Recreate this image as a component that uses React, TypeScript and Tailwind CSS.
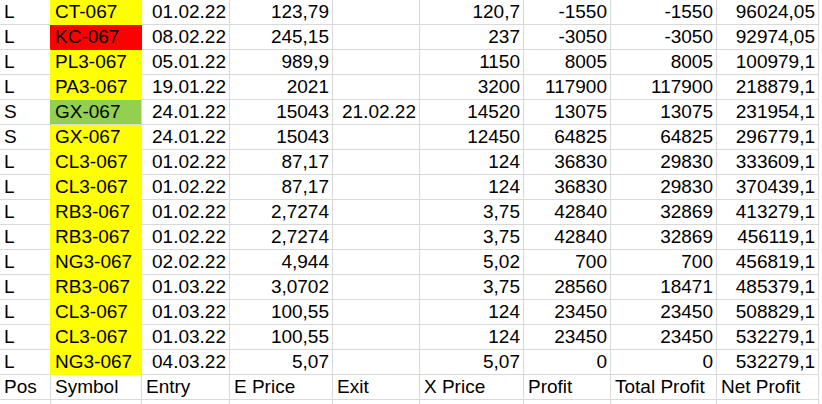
const rows: [string, string, string, string, string, string, string, string, string, string][] = [
  ['L', 'CT-067', '01.02.22', '123,79', '', '120,7', '-1550', '-1550', '96024,05', 'y'],
  ['L', 'KC-067', '08.02.22', '245,15', '', '237', '-3050', '-3050', '92974,05', 'r'],
  ['L', 'PL3-067', '05.01.22', '989,9', '', '1150', '8005', '8005', '100979,1', 'y'],
  ['L', 'PA3-067', '19.01.22', '2021', '', '3200', '117900', '117900', '218879,1', 'y'],
  ['S', 'GX-067', '24.01.22', '15043', '21.02.22', '14520', '13075', '13075', '231954,1', 'g'],
  ['S', 'GX-067', '24.01.22', '15043', '', '12450', '64825', '64825', '296779,1', 'y'],
  ['L', 'CL3-067', '01.02.22', '87,17', '', '124', '36830', '29830', '333609,1', 'y'],
  ['L', 'CL3-067', '01.02.22', '87,17', '', '124', '36830', '29830', '370439,1', 'y'],
  ['L', 'RB3-067', '01.02.22', '2,7274', '', '3,75', '42840', '32869', '413279,1', 'y'],
  ['L', 'RB3-067', '01.02.22', '2,7274', '', '3,75', '42840', '32869', '456119,1', 'y'],
  ['L', 'NG3-067', '02.02.22', '4,944', '', '5,02', '700', '700', '456819,1', 'y'],
  ['L', 'RB3-067', '01.03.22', '3,0702', '', '3,75', '28560', '18471', '485379,1', 'y'],
  ['L', 'CL3-067', '01.03.22', '100,55', '', '124', '23450', '23450', '508829,1', 'y'],
  ['L', 'CL3-067', '01.03.22', '100,55', '', '124', '23450', '23450', '532279,1', 'y'],
  ['L', 'NG3-067', '04.03.22', '5,07', '', '5,07', '0', '0', '532279,1', 'y'],
];

const headers = ['Pos', 'Symbol', 'Entry', 'E Price', 'Exit', 'X Price', 'Profit', 'Total Profit', 'Net Profit'];

const fills: Record<string, string> = {
  y: 'bg-[#ffff00] border-[#ffff00]',
  r: 'bg-[#ff0000] border-[#ff0000]',
  g: 'bg-[#92d050] border-[#92d050]',
};
const posEdge: Record<string, string> = {
  y: 'border-r-[#ffff00]',
  r: 'border-r-[#ff0000]',
  g: 'border-r-[#92d050]',
};

const cell = 'h-[25px] border-r border-b border-[#d9d9d9] leading-[24px] whitespace-nowrap overflow-hidden';

const App = () => {
  return (
    <div className="w-[822px] h-[404px] overflow-hidden bg-white text-black text-[19px] font-['Liberation_Sans',Arial,sans-serif]">
      <div className="grid grid-cols-[51px_91px_88px_103px_87px_104px_87px_106px_102px]">
        {rows.map((r, i) => (
          <div key={i} className="contents">
            <div className={`${cell} pl-[4px] ${posEdge[r[9]]}`}>{r[0]}</div>
            <div className={`${cell} pl-[4px] ${fills[r[9]]}`}>{r[1]}</div>
            {r.slice(2, 9).map((v, j) => (
              <div key={j} className={`${cell} pr-[3px] text-right`}>
                {v}
              </div>
            ))}
          </div>
        ))}
        {headers.map((h) => (
          <div key={h} className={`${cell} pl-[4px]`}>
            {h}
          </div>
        ))}
        {headers.map((h) => (
          <div key={h + '-e'} className={cell} />
        ))}
      </div>
    </div>
  );
};

export default App;
